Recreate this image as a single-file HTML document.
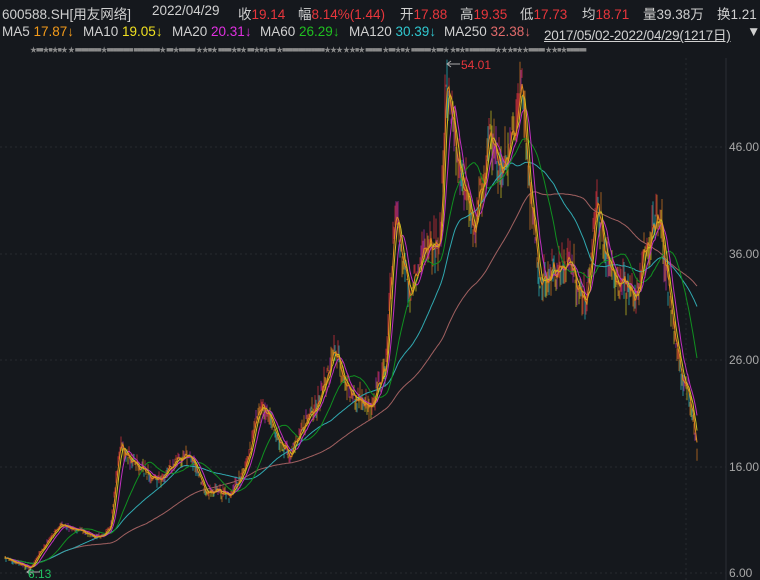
<!DOCTYPE html><html><head><meta charset="utf-8"><style>
body{margin:0;background:#15181d;width:760px;height:580px;overflow:hidden;font-family:"Liberation Sans","Noto Sans CJK SC",sans-serif;color:#c8c8c8}
.t{position:absolute;font-size:13.5px;white-space:nowrap;color:#d0d0d0}
.red{color:#e8363c}.o{color:#f29a1a}.y{color:#f0e020}.m{color:#e030e0}.g{color:#20c020}.c{color:#30c8d0}.p{color:#e06a6a}
.stars{position:absolute;top:45px;left:30px;width:670px;height:10px;overflow:hidden;font-size:7px;color:#8a8a8a;letter-spacing:-1px;white-space:nowrap}
.ax{position:absolute;left:729px;font-size:12px;color:#a8a8a8}
</style></head><body>
<div class="t" style="left:2px;top:3px">600588.SH[用友网络]</div>
<div class="t" style="left:152px;top:3px">2022/04/29</div>
<div class="t" style="left:238px;top:3px">收<span class="red">19.14</span></div>
<div class="t" style="left:298px;top:3px">幅<span class="red">8.14%(1.44)</span></div>
<div class="t" style="left:400px;top:3px">开<span class="red">17.88</span></div>
<div class="t" style="left:460px;top:3px">高<span class="red">19.35</span></div>
<div class="t" style="left:520px;top:3px">低<span class="red">17.73</span></div>
<div class="t" style="left:582px;top:3px">均<span class="red">18.71</span></div>
<div class="t" style="left:643px;top:3px">量39.38万</div>
<div class="t" style="left:717px;top:3px">换1.21</div>
<div class="t" style="left:2px;top:24px">MA5 <span class="o">17.87↓</span></div>
<div class="t" style="left:83px;top:24px">MA10 <span class="y">19.05↓</span></div>
<div class="t" style="left:172px;top:24px">MA20 <span class="m">20.31↓</span></div>
<div class="t" style="left:260px;top:24px">MA60 <span class="g">26.29↓</span></div>
<div class="t" style="left:349px;top:24px">MA120 <span class="c">30.39↓</span></div>
<div class="t" style="left:444px;top:24px">MA250 <span class="p">32.38↓</span></div>
<div class="t" style="left:544px;top:24px;text-decoration:underline;letter-spacing:-0.2px">2017/05/02-2022/04/29(1217日)</div>
<div class="t" style="left:747px;top:24px">▼</div>
<div class="stars">★■■★■★■★ ★ ■■■■■■■■★■■■■■■■■ ■■■■■■■■★ ■■★■■■■■ ★★■★ ■■■■★■★ ■■★■★■■ ★■■■■■■■■■■■■■★★★ ★★■★ ■■■■■ ★■■★■★ ■■■■■■★■■★ ★■★■ ■■■■■■■■★★★■★★■■■■■ ★★■★■■■■■■</div>
<svg id="s" width="760" height="580" style="position:absolute;left:0;top:0">
<line x1="726" y1="58" x2="726" y2="580" stroke="#2a2e35"/>
<g stroke="#262a30" stroke-dasharray="2,3">
<line x1="0" y1="147" x2="726" y2="147"/><line x1="0" y1="254" x2="726" y2="254"/><line x1="0" y1="360" x2="726" y2="360"/><line x1="0" y1="467" x2="726" y2="467"/><line x1="0" y1="573" x2="726" y2="573"/>
<line x1="686" y1="58" x2="686" y2="580"/>
</g>
<g id="cd"></g><g id="ma"></g>
<line x1="447" y1="64" x2="460" y2="64" stroke="#aaa"/><path d="M451 61 L447 64 L451 67" fill="none" stroke="#aaa"/>
<text x="461" y="69" fill="#e8363c" font-size="12" font-family="Liberation Sans">54.01</text>
<line x1="40" y1="572" x2="27" y2="572" stroke="#aaa"/><path d="M31 569 L27 572 L31 575" fill="none" stroke="#aaa"/>
<text x="28" y="578" fill="#20c060" font-size="12" font-family="Liberation Sans">6.13</text>
</svg>
<div class="ax" style="top:140px">46.00</div><div class="ax" style="top:247px">36.00</div><div class="ax" style="top:353px">26.00</div><div class="ax" style="top:460px">16.00</div><div class="ax" style="top:566px">6.00</div>
<script>
var K=[[5,558],[30,568],[45,545],[60,525],[80,530],[95,538],[110,530],[120,445],[135,465],[160,480],[175,460],[190,455],[205,490],[230,495],[245,470],[262,400],[280,440],[290,455],[300,430],[320,400],[335,350],[350,395],[370,405],[385,370],[395,220],[410,290],[425,255],[440,240],[447,75],[455,140],[465,185],[475,230],[490,130],[500,170],[510,150],[522,95],[530,200],[540,280],[555,270],[570,260],[585,305],[598,200],[605,260],[620,280],[635,300],[645,250],[660,215],[670,300],[680,370],[690,400],[697,450]];
var seed=7;function rnd(){seed=(seed*16807)%2147483647;return seed/2147483647;}
var ys=[];for(var x=5;x<=697;x++){var i=0;while(K[i+1]&&K[i+1][0]<x)i++;var a=K[i],b=K[i+1]||a;var t=b[0]==a[0]?0:(x-a[0])/(b[0]-a[0]);var v=a[1]+(b[1]-a[1])*t;var sc=(580-v)/60;ys.push(v+(rnd()-0.5)*5*Math.max(sc,0.6));}
var cd=document.getElementById('cd'),h='';
for(var j=0;j<ys.length;j++){var x=5+j,v=ys[j],up=j>0&&v<ys[j-1];var sc=Math.max((580-v)/60,0.7);var hi=v-rnd()*4*sc,lo=v+rnd()*4*sc;var col=up?'#c8303a':(rnd()<0.5?'#28a8b0':'#b8b020');if(rnd()<0.3)col='#c07020';if(rnd()<0.12)col='#a028a0';
h+='<line x1="'+x+'" y1="'+hi.toFixed(1)+'" x2="'+x+'" y2="'+lo.toFixed(1)+'" stroke="'+col+'" stroke-width="0.8"/>';}
cd.innerHTML=h;
function ma(w,c){var p='';for(var j=0;j<ys.length;j++){var s=0,n=0;for(var k=Math.max(0,j-w+1);k<=j;k++){s+=ys[k];n++;}p+=(5+j)+','+(s/n).toFixed(1)+' ';}return '<polyline points="'+p+'" fill="none" stroke="'+c+'" stroke-width="1"/>';}
document.getElementById('ma').innerHTML=ma(142,'#a06060')+ma(68,'#30a8b0')+ma(34,'#109020')+ma(11,'#c030c0')+ma(6,'#d0c020')+ma(3,'#e08820');
</script>
</body></html>
